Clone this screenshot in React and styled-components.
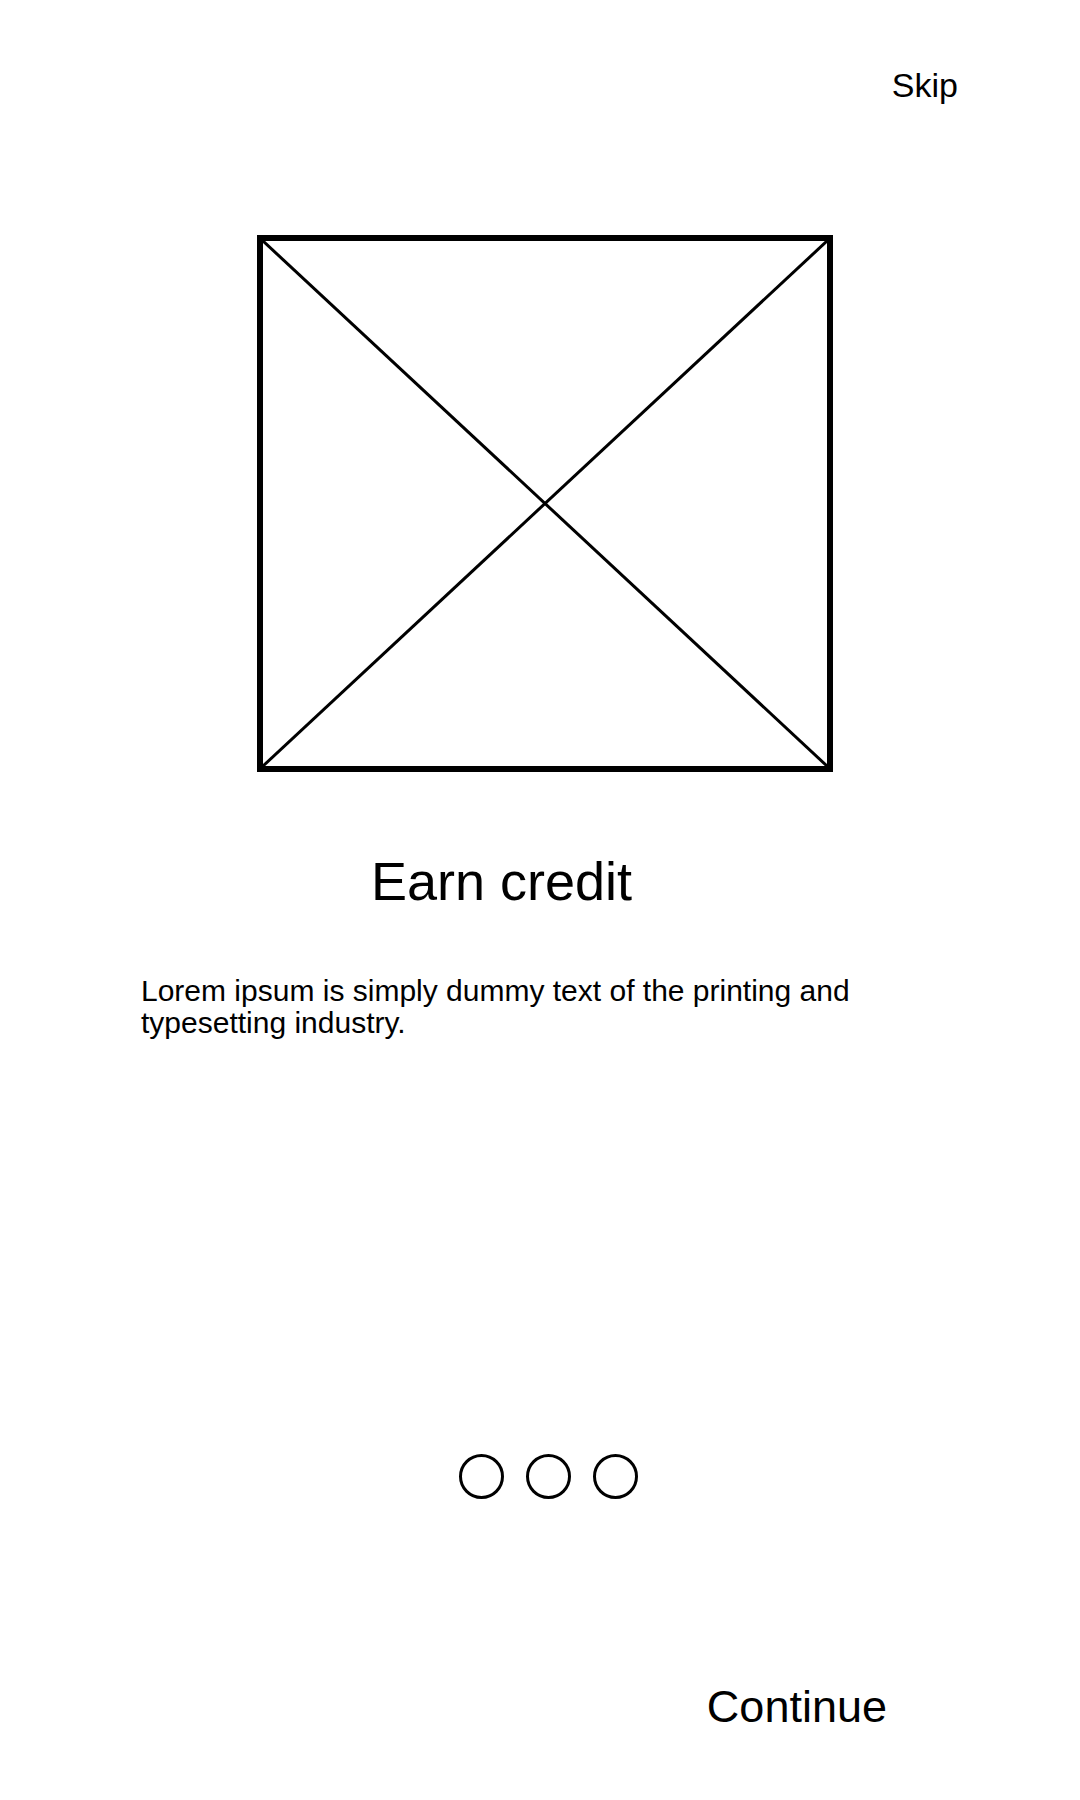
import React from 'react';
import styled, { createGlobalStyle } from 'styled-components';

const GlobalStyle = createGlobalStyle`
  html, body {
    margin: 0;
    padding: 0;
    background: #ffffff;
  }
  body {
    font-family: "Liberation Sans", Arial, sans-serif;
    color: #000000;
  }
`;

const slide = {
  title: 'Earn credit',
  text: 'Lorem ipsum is simply dummy text of the printing and typesetting industry.',
};

export default function App() {
  return (
    <>
      <GlobalStyle />
      <Screen>
        <TopBar>
          <SkipButton>Skip</SkipButton>
        </TopBar>
        <ImageRow>
          <Placeholder>
            <svg width="100%" height="100%" viewBox="0 0 100 100" preserveAspectRatio="none">
              <line x1="0" y1="0" x2="100" y2="100" stroke="#000" strokeWidth="3" vectorEffect="non-scaling-stroke" />
              <line x1="100" y1="0" x2="0" y2="100" stroke="#000" strokeWidth="3" vectorEffect="non-scaling-stroke" />
            </svg>
          </Placeholder>
        </ImageRow>
        <Title>{slide.title}</Title>
        <Description>{slide.text}</Description>
        <Dots>
          {[0, 1, 2].map((n) => (
            <Dot key={n} />
          ))}
        </Dots>
        <BottomBar>
          <ContinueButton>Continue</ContinueButton>
        </BottomBar>
      </Screen>
    </>
  );
}

const Screen = styled.div`
  width: 1080px;
  height: 1800px;
  display: flex;
  flex-direction: column;
`;

const TopBar = styled.div`
  display: flex;
  justify-content: flex-end;
  padding: 68px 122px 0 0;
`;

const SkipButton = styled.span`
  font-size: 34px;
  line-height: 34px;
  cursor: pointer;
`;

const ImageRow = styled.div`
  display: flex;
  padding-left: 257px;
  margin-top: 133px;
`;

const Placeholder = styled.div`
  width: 576px;
  height: 537px;
  box-sizing: border-box;
  border: 6px solid #000;
  svg {
    display: block;
  }
`;

const Title = styled.h1`
  margin: 82px 0 0;
  padding-left: 371px;
  font-size: 54px;
  line-height: 54px;
  font-weight: 400;
`;

const Description = styled.p`
  margin: 67px 0 0;
  padding-left: 141px;
  width: 740px;
  font-size: 30px;
  line-height: 32px;
`;

const Dots = styled.div`
  display: flex;
  gap: 22px;
  padding-left: 459px;
  margin-top: 415px;
`;

const Dot = styled.span`
  width: 45px;
  height: 45px;
  box-sizing: border-box;
  border: 3px solid #000;
  border-radius: 50%;
`;

const BottomBar = styled.div`
  display: flex;
  justify-content: flex-end;
  padding-right: 193px;
  margin-top: 185px;
`;

const ContinueButton = styled.span`
  font-size: 45px;
  line-height: 45px;
  cursor: pointer;
`;
